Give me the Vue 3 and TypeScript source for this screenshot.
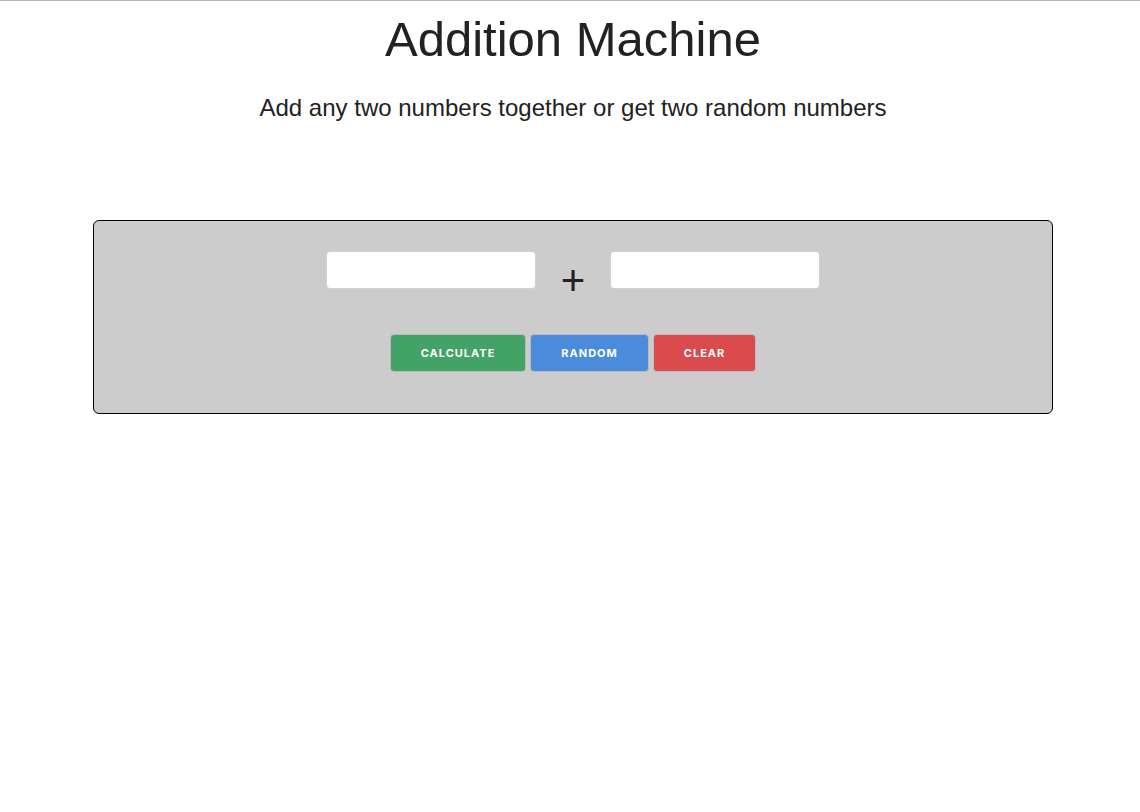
<script setup lang="ts">
import { ref } from 'vue'

const first = ref('')
const second = ref('')
const result = ref<number | null>(null)

function calculate(): void {
  result.value = Number(first.value) + Number(second.value)
}

function randomize(): void {
  first.value = String(Math.floor(Math.random() * 100))
  second.value = String(Math.floor(Math.random() * 100))
}

function clear(): void {
  first.value = ''
  second.value = ''
  result.value = null
}
</script>

<template>
  <main class="page">
    <header class="intro">
      <h1>Addition Machine</h1>
      <h5>Add any two numbers together or get two random numbers</h5>
    </header>
    <form class="machine" @submit.prevent="calculate">
      <div class="operands">
        <input v-model="first" type="text" aria-label="First number" />
        <span class="plus">+</span>
        <input v-model="second" type="text" aria-label="Second number" />
      </div>
      <div class="actions">
        <button type="submit" class="calculate">Calculate</button>
        <button type="button" class="random" @click="randomize">Random</button>
        <button type="button" class="clear" @click="clear">Clear</button>
      </div>
      <output v-if="result !== null" class="result">{{ result }}</output>
    </form>
  </main>
</template>

<style>
body {
  margin: 0;
  background: #fff;
}
</style>

<style scoped>
.page {
  box-sizing: border-box;
  border-top: 1px solid #b5b5b5;
  padding-left: 6px;
  font-family: "Liberation Sans", Arial, sans-serif;
  color: #222;
}

.intro {
  text-align: center;
}

h1 {
  margin: 0;
  padding-top: 8px;
  font-size: 49px;
  line-height: 60px;
  font-weight: 400;
}

h5 {
  margin: 21px 0 0;
  font-size: 24px;
  line-height: 36px;
  font-weight: 400;
}

.machine {
  box-sizing: border-box;
  max-width: 960px;
  min-height: 194px;
  margin: 94px auto 0;
  padding: 30px 20px;
  border: 1px solid #000;
  border-radius: 6px;
  background: #ccc;
}

.operands {
  display: flex;
  justify-content: center;
  gap: 24px;
}

input {
  box-sizing: border-box;
  width: 210px;
  height: 38px;
  padding: 6px 10px;
  border: 1px solid #d1d1d1;
  border-radius: 4px;
  background: #fff;
  font: inherit;
  font-size: 15px;
}

.plus {
  width: 26px;
  font-size: 42px;
  line-height: 60px;
  text-align: center;
}

.actions {
  display: flex;
  justify-content: center;
  gap: 4px;
  margin-top: 23px;
}

button {
  box-sizing: border-box;
  height: 38px;
  padding: 0 30px;
  border: 1px solid #bbb;
  border-radius: 4px;
  color: #fff;
  font-family: Inter, "Liberation Sans", sans-serif;
  font-size: 11px;
  line-height: 36px;
  font-weight: 700;
  letter-spacing: 1px;
  text-transform: uppercase;
  cursor: pointer;
}

.calculate {
  background: #43a265;
}

.random {
  background: #4b8bdc;
}

.clear {
  background: #db4b4d;
}

.result {
  display: block;
  margin-top: 20px;
  font-size: 24px;
  text-align: center;
}
</style>
